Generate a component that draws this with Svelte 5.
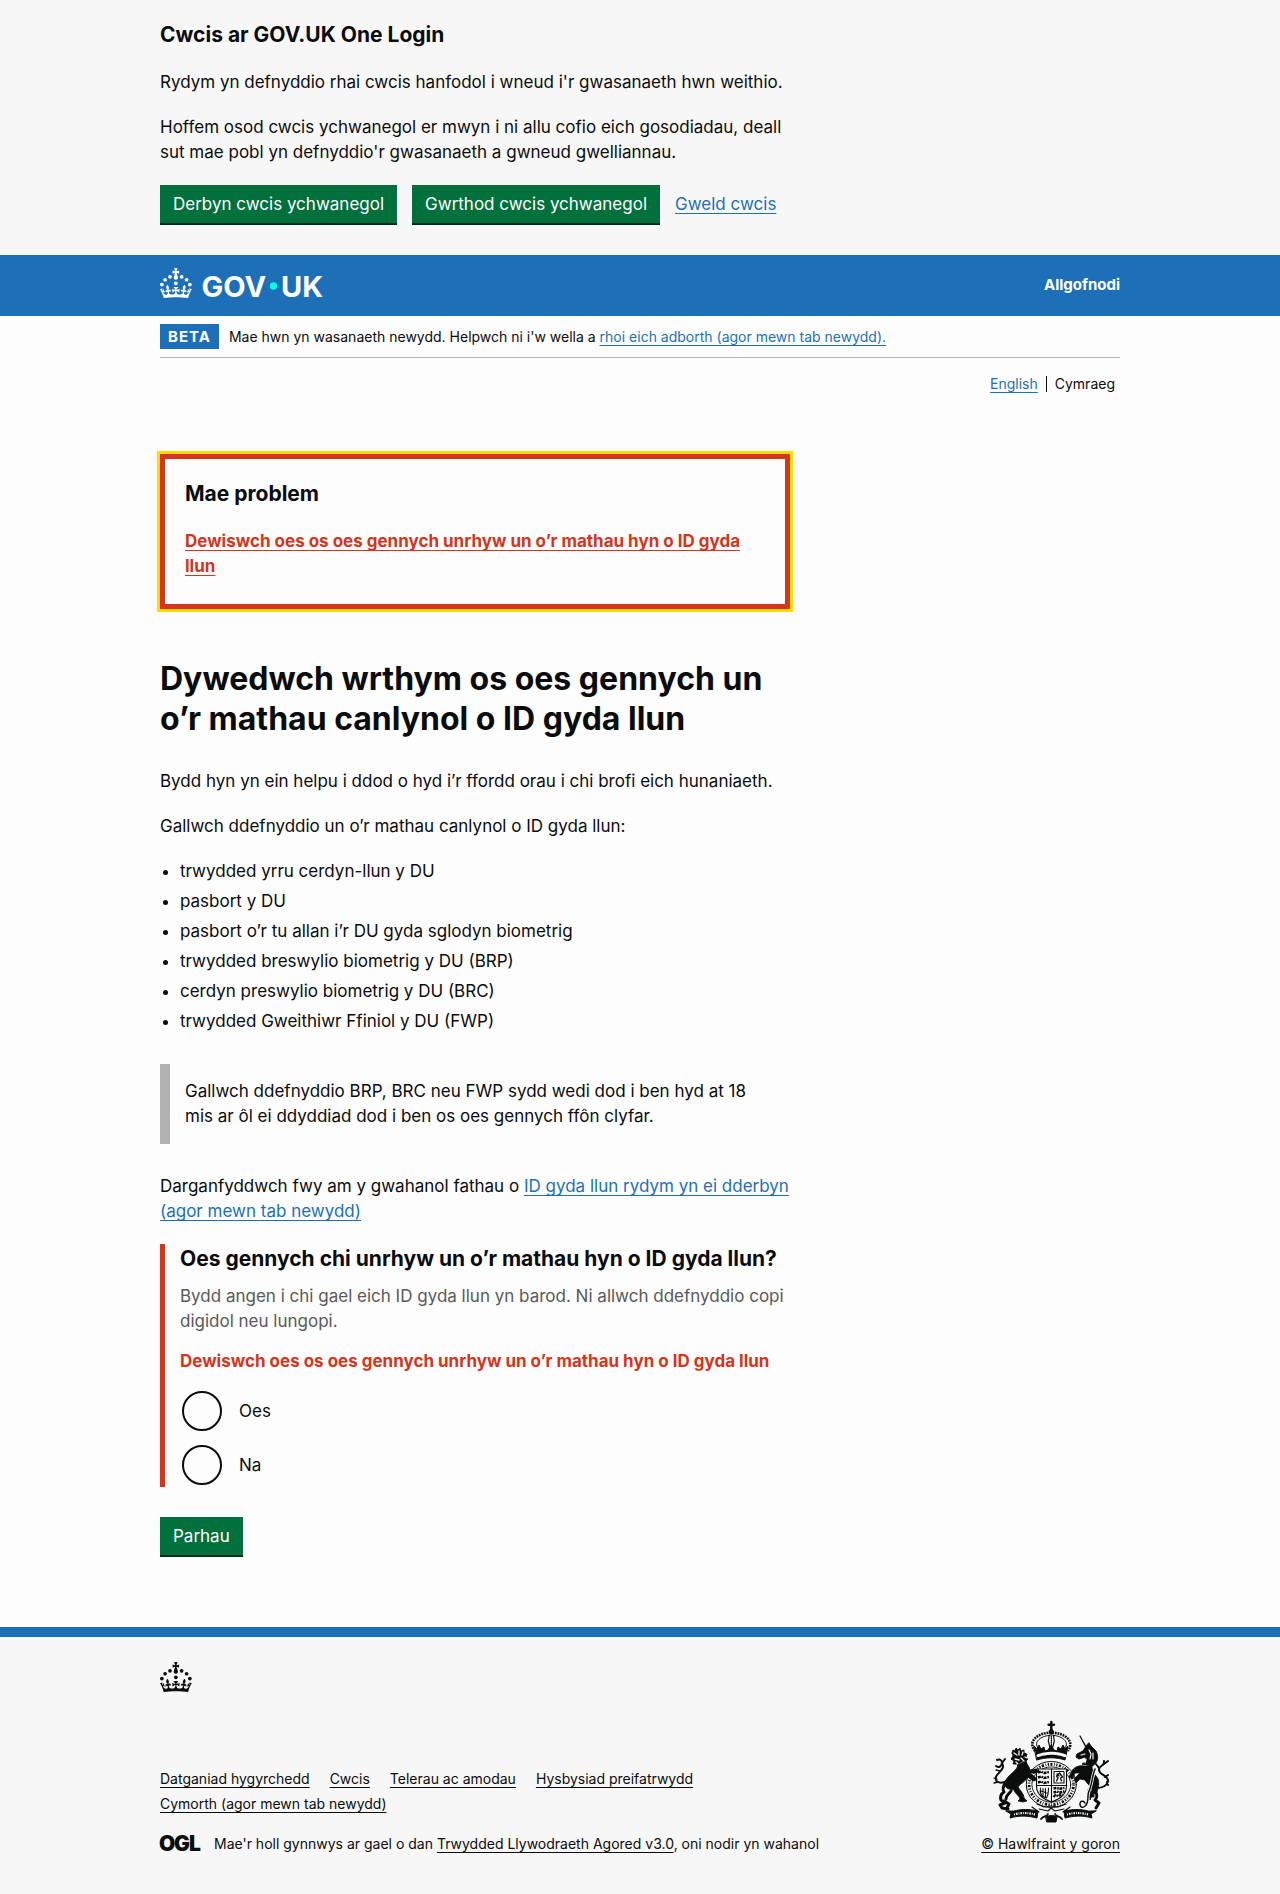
<script>
  const idTypes = [
    'trwydded yrru cerdyn-llun y DU',
    'pasbort y DU',
    'pasbort o’r tu allan i’r DU gyda sglodyn biometrig',
    'trwydded breswylio biometrig y DU (BRP)',
    'cerdyn preswylio biometrig y DU (BRC)',
    'trwydded Gweithiwr Ffiniol y DU (FWP)'
  ];
  const footerLinks = [
    'Datganiad hygyrchedd',
    'Cwcis',
    'Telerau ac amodau',
    'Hysbysiad preifatrwydd',
    'Cymorth (agor mewn tab newydd)'
  ];
  const options = [
    { value: 'yes', label: 'Oes' },
    { value: 'no', label: 'Na' }
  ];
  let answer = $state('');
</script>

{#snippet crown()}
  <circle cx="20" cy="17.6" r="3.7" />
  <circle cx="10.2" cy="23.5" r="3.7" />
  <circle cx="3.7" cy="33.2" r="3.7" />
  <circle cx="31.7" cy="30.6" r="3.7" />
  <circle cx="43.3" cy="17.6" r="3.7" />
  <circle cx="53.2" cy="23.5" r="3.7" />
  <circle cx="59.7" cy="33.2" r="3.7" />
  <path d="M33.1,9.8c.2-.1.3-.3.5-.5l4.6,2.4v-6.8l-4.6,1.5c-.1-.2-.3-.3-.5-.5l1.9-5.9h-6.7l1.9,5.9c-.2.1-.3.3-.5.5l-4.6-1.5v6.8l4.6-2.4c.1.2.3.3.5.5l-2.6,8c-.9,2.8,1.2,5.7,4.1,5.7h0c3,0,5.1-2.9,4.1-5.7l-2.6-8ZM37,37.9s-3.4,3.8-4.1,6.1c2.2,0,4.2-.5,6.4-2.8l-.7,8.5c-2-2.8-4.4-4.1-5.7-3.8.1,3.1.5,6.7,5.8,7.2,3.7.3,6.7-1.5,7-3.8.4-2.6-2-4.3-3.7-1.6-1.4-4.5,2.4-6.1,4.9-3.2-1.9-4.5-1.8-7.7,2.4-10.9,3,4,2.6,7.3-1.2,11.1,2.4-1.3,6.2,0,4,4.6-1.2-2.8-3.7-2.2-4.2.2-.3,1.7.7,3.7,3,4.2,1.9.3,4.7-.9,7-5.9-1.3,0-2.4.7-3.9,1.7l2.4-8c.6,2.3,1.4,3.7,2.2,4.5.6-1.6.5-2.8,0-5.3l5,1.8c-2.6,3.6-5.2,8.7-7.3,17.5-7.4-1.1-15.7-1.7-24.5-1.7h0c-8.8,0-17.1.6-24.5,1.7-2.1-8.9-4.7-13.9-7.3-17.5l5-1.8c-.5,2.5-.6,3.7,0,5.3.8-.8,1.6-2.3,2.2-4.5l2.4,8c-1.5-1-2.6-1.7-3.9-1.7,2.3,5,5.2,6.2,7,5.9,2.3-.4,3.3-2.4,3-4.2-.5-2.4-3-3.1-4.2-.2-2.2-4.6,1.6-6,4-4.6-3.7-3.7-4.2-7.1-1.2-11.1,4.2,3.2,4.3,6.4,2.4,10.9,2.5-2.8,6.3-1.3,4.9,3.2-1.8-2.7-4.1-1-3.7,1.6.3,2.3,3.3,4.1,7,3.8,5.4-.5,5.7-4.2,5.8-7.2-1.3-.2-3.7,1-5.7,3.8l-.7-8.5c2.2,2.3,4.2,2.7,6.4,2.8-.7-2.3-4.1-6.1-4.1-6.1h10.6,0Z" />
{/snippet}

<section class="cookies" aria-label="Cwcis ar GOV.UK One Login">
  <div class="container">
    <div class="column">
      <h2 class="heading-m">Cwcis ar GOV.UK One Login</h2>
      <p>Rydym yn defnyddio rhai cwcis hanfodol i wneud i'r gwasanaeth hwn weithio.</p>
      <p>Hoffem osod cwcis ychwanegol er mwyn i ni allu cofio eich gosodiadau, deall sut mae pobl yn defnyddio'r gwasanaeth a gwneud gwelliannau.</p>
      <div class="actions">
        <button type="button">Derbyn cwcis ychwanegol</button>
        <button type="button">Gwrthod cwcis ychwanegol</button>
        <a href="#cwcis">Gweld cwcis</a>
      </div>
    </div>
  </div>
</section>

<header>
  <div class="container header-row">
    <a class="logo" href="#gov" aria-label="GOV.UK">
      <svg viewBox="0 0 324 60" width="162" height="30" fill="currentColor" aria-hidden="true">
        {@render crown()}
        <text x="83" y="58" class="wordmark">GOV</text>
        <circle class="dot" cx="227" cy="36" r="7.3" />
        <text x="242" y="58" class="wordmark">UK</text>
      </svg>
    </a>
    <a class="sign-out" href="#allgofnodi">Allgofnodi</a>
  </div>
</header>

<div class="container">
  <div class="phase">
    <strong class="tag">BETA</strong>
    <span>Mae hwn yn wasanaeth newydd. Helpwch ni i'w wella a <a href="#adborth">rhoi eich adborth (agor mewn tab newydd).</a></span>
  </div>
  <nav class="languages" aria-label="Dewis iaith">
    <a href="#english" lang="en">English</a>
    <span class="current">Cymraeg</span>
  </nav>

  <main class="column">
    <div class="error-summary" role="alert">
      <h2 class="heading-m">Mae problem</h2>
      <a href="#answer-yes">Dewiswch oes os oes gennych unrhyw un o’r mathau hyn o ID gyda llun</a>
    </div>

    <h1>Dywedwch wrthym os oes gennych un o’r mathau canlynol o ID gyda llun</h1>
    <p>Bydd hyn yn ein helpu i ddod o hyd i’r ffordd orau i chi brofi eich hunaniaeth.</p>
    <p>Gallwch ddefnyddio un o’r mathau canlynol o ID gyda llun:</p>
    <ul class="id-types">
      {#each idTypes as type}
        <li>{type}</li>
      {/each}
    </ul>
    <div class="inset">Gallwch ddefnyddio BRP, BRC neu FWP sydd wedi dod i ben hyd at 18 mis ar ôl ei ddyddiad dod i ben os oes gennych ffôn clyfar.</div>
    <p>Darganfyddwch fwy am y gwahanol fathau o <a href="#id">ID gyda llun rydym yn ei dderbyn (agor mewn tab newydd)</a></p>

    <form onsubmit={(e) => e.preventDefault()}>
      <div class="group">
        <fieldset aria-describedby="hint error">
          <legend class="heading-m">Oes gennych chi unrhyw un o’r mathau hyn o ID gyda llun?</legend>
          <div id="hint" class="hint">Bydd angen i chi gael eich ID gyda llun yn barod. Ni allwch ddefnyddio copi digidol neu lungopi.</div>
          <p id="error" class="error-message">Dewiswch oes os oes gennych unrhyw un o’r mathau hyn o ID gyda llun</p>
          <div class="radios">
            {#each options as option}
              <div class="radio">
                <input type="radio" id="answer-{option.value}" name="answer" value={option.value} bind:group={answer} />
                <label for="answer-{option.value}">{option.label}</label>
              </div>
            {/each}
          </div>
        </fieldset>
      </div>
      <button type="submit">Parhau</button>
    </form>
  </main>
</div>

<footer>
  <div class="container">
    <svg class="footer-crown" viewBox="0 0 64 60" width="32" height="30" fill="currentColor" aria-hidden="true">
      {@render crown()}
    </svg>
    <div class="meta">
      <div class="meta-main">
        <ul class="footer-links">
          {#each footerLinks as link}
            <li><a href="#footer">{link}</a></li>
          {/each}
        </ul>
        <div class="licence">
          <svg width="42" height="25" viewBox="0 0 42 25" role="img" aria-label="OGL">
            <text y="20" class="ogl"><tspan x="-1">O</tspan><tspan x="14">G</tspan><tspan x="29">L</tspan></text>
          </svg>
          <span>Mae'r holl gynnwys ar gael o dan <a href="#ogl">Trwydded Llywodraeth Agored v3.0</a>, oni nodir yn wahanol</span>
        </div>
      </div>
      <a class="copyright" href="#hawlfraint">
        <svg viewBox="0 0 118 102" width="118" height="102" fill="none" stroke="currentColor" stroke-linecap="round" stroke-linejoin="round" aria-hidden="true">
          <!-- Crown -->
          <path d="M59.3 1v8M56.6 3.8h5.4" stroke-width="2.4" />
          <circle cx="59.3" cy="10.8" r="2.2" fill="currentColor" />
          <path d="M43 30C35 20 46 12 59 11.5C73 12 83 20 76 30" stroke-width="2.6" stroke-dasharray="1.8 .9" stroke-linecap="butt" />
          <path d="M46 27C41 21 49 15 57 14.5M73 27C78 21 70 15 62 14.5" stroke-width="1" />
          <path d="M57.4 14h4l.9 6l-1.8 7h-2.4l-1.8-7z" stroke-width="1.2" />
          <path d="M59.4 15v10" stroke-width="1.2" stroke-dasharray="1 1" />
          <path d="M42 25l3 3l2-4l2 4l3-2l1 4l3-1l3-5l3 5l3 1l1-4l3 2l2-4l2 4l3-3l-3 14c-9-3-19-3-28 0z" fill="currentColor" stroke-width="1" />
          <path d="M46 34.6c9-3 18-3 27 0" stroke="#f7f7f7" stroke-width="3" stroke-dasharray="3.4 1.5" />
          <!-- Garter -->
          <ellipse cx="59.3" cy="63.5" rx="25" ry="23" stroke-width="1" />
          <ellipse cx="59.3" cy="63.5" rx="22.2" ry="20.2" stroke-width="2.8" stroke-dasharray="1.2 1.4 2.2 1.6 .8 1.5" stroke-linecap="butt" />
          <ellipse cx="59.3" cy="63.5" rx="19.4" ry="17.6" stroke-width=".9" />
          <!-- Shield -->
          <path d="M44.5 48h30v17c0 9-7 13-15 16c-8-3-15-7-15-16z" fill="#f7f7f7" stroke-width="1.1" />
          <path d="M59.5 48v33M44.5 64.5h30" stroke-width="1.1" />
          <path d="M46 51.5l3-1l3 1.5l5-1M46 56.5l3-1l3 1.5l5-1M46 61.5l3-1l3 1.5l5-1M61.5 76l2-2l3 1l4-2M61.5 71.5l3-1l3 1l5-1M61.5 67.5l3-.6l3 .8l5-.8" stroke-width="2.4" stroke-dasharray="3 .8 1.6 .7" stroke-linecap="butt" />
          <path d="M62 50.5h10v11.5h-10z" stroke-width="1.1" stroke-dasharray="1.4 .7" />
          <path d="M64.5 60l1.5-3l-1.5-2l3-3l1.5 2l1.5 2l-2 1l1 3M65 53l2 2" stroke-width="1.3" />
          <path d="M48.5 67c-1 5 1 9 6 10c2-3 2-7 2-10M51 67.5v7M53.5 67.5v8M49 70l6 2" stroke-width="1.1" />
          <!-- Lion -->
          <path d="M21 29l2 1l1-3l2 2l2-2l1 3l3-1l0 3l3 1l-1 3l2 2l-2 2l1 3l-3 0l0 3l-3-1l-3 1l-1-3l-4 0l1-3l-3-2l2-3l-1-3z" fill="currentColor" stroke-width="1" stroke-dasharray="1.6 1" />
          <path d="M22 32l3 2M27 30l0 4M31 31l-1 3M23 38l4 1M29 37l3 3M33 36l2 1M28 43l3-2M24 41l2 2" stroke="#f7f7f7" stroke-width="1.3" />
          <path d="M26 44c-1 6-9 9-12 15c-2 4-1 8 3 9l5 1c1 4 5 5 6 9l-2 2l5 1l4-1l-3-3c0-4-4-8-6-11c3-4 8-6 10-10l5 4l4-1l-2-3l-5-4l7 0l2-3l-5-1l-4 1c-1-4-3-7-6-8z" fill="currentColor" stroke-width=".8" />
          <path d="M14 61c-3 4-4 7-2 10c-3 2-4 5-3 8l4 3l-5 2l2 3l6 1M12 80l5 3l-2 4M19 70c-2 3-5 4-5 8" stroke-width="3" />
          <path d="M15 60C7 64 1 60 5 54C9 49 13 47 10 42M5 39c3-1 5 0 5 3l3-4M4 45c3 2 5 1 6-3" stroke-width="2" />
          <path d="M2 57l3 1M2 62l4-1M8 50l-4-1" stroke-width="1.3" />
          <!-- Unicorn -->
          <path d="M88 15l6 11" stroke-width="1.3" stroke-dasharray="2 .6" />
          <path d="M94 25l-3 5l-6 3l-1 3l3 2l6-2l2 4l-5 3l10 2c6-3 7-9 4-15l-5-5l-2-3z" fill="currentColor" stroke-width="1" />
          <path d="M89 34l4-1M97 29l2 4l-1 5M101 32l0 6M94 38l-1 4" stroke="#f7f7f7" stroke-width="1.2" />
          <path d="M93 45c-6-1-11 1-13 5l-3 6l3 2l3-6l5 0l-6 6l2 4l4-4l5 1c2 4 6 6 7 10l-3 6l1 4l2-4l5-4c2-6 3-12-1-16c-3-3-4-7-4-10z" fill="currentColor" stroke-width=".8" />
          <path d="M102 69c3 3 4 7 1 10l4 3l-3 5M97 69l4 6" stroke-width="3" />
          <path d="M103 48c-3 8-3 15-6 22c-2 5 0 10-3 14c-3 4-6 2-6-1s3-4 5-1" stroke="#f7f7f7" stroke-width="3.2" />
          <path d="M103 48c-3 8-3 15-6 22c-2 5 0 10-3 14c-3 4-6 2-6-1s3-4 5-1" stroke-width="1.5" stroke-dasharray="1.8 1" />
          <path d="M104 67c9 0 14-5 11-10c-3-4-9-4-8-9c1-4 6-3 5-8M112 43l4-3M107 47l-3-4M113 56l3-2M115 61l1 3" stroke-width="2" />
          <!-- Scroll -->
          <path d="M14 90l5 3l-1 4c10-3 19-2 27 0l1-7c-9-2-17-2-24 0z" fill="currentColor" stroke-width="1" />
          <path d="M104 90l-5 3l1 4c-10-3-19-2-27 0l-1-7c9-2 17-2 24 0z" fill="currentColor" stroke-width="1" />
          <path d="M22 93.5c7-2 14-2 21 0M75 93.5c7-2 14-2 21 0" stroke="#f7f7f7" stroke-width="2.2" stroke-dasharray=".9 1.1 1.5 1" stroke-linecap="butt" />
          <path d="M45 83l7 3l7-1l7 1l8-3M47 88l9 2l3-3l4 3l9-2M40 86l7 5M78 86l-7 5" stroke-width="1.2" />
          <path d="M49 98c3-4 6-2 7-5M70 98c-3-4-6-2-7-5" stroke-width="1.8" />
          <path d="M54 96c3-2 8-2 11 0l-1 5h-9z" fill="currentColor" stroke-width="1" />
        </svg>
        <span>© Hawlfraint y goron</span>
      </a>
    </div>
  </div>
</footer>

<style>
  :global(body) {
    margin: 0;
    background: #fdfdfd;
    color: #0b0c0c;
    font-family: Inter, "Open Sans", sans-serif;
    font-size: 17px;
    line-height: 25px;
  }
  .container {
    max-width: 960px;
    margin: 0 auto;
  }
  .column {
    max-width: 630px;
  }
  p {
    margin: 0 0 20px;
  }
  a {
    color: #1d70b8;
    text-decoration: underline;
    text-decoration-thickness: 1px;
    text-underline-offset: 3px;
    text-decoration-skip-ink: none;
  }
  svg {
    overflow: visible;
  }
  .heading-m {
    margin: 0 0 20px;
    font-size: 21px;
    line-height: 30px;
    font-weight: 700;
  }
  button {
    padding: 7px 13px 6px;
    border: 0;
    background: #00703c;
    box-shadow: 0 2px 0 #002d18;
    color: #fff;
    font-family: inherit;
    font-size: 17px;
    line-height: 25px;
    cursor: pointer;
  }
  .cookies {
    padding: 20px 0 32px;
    background: #f7f7f7;
  }
  .actions {
    display: flex;
    align-items: center;
    gap: 15px;
  }

  header {
    background: #1d70b8;
    padding: 13px 0 14px;
  }
  .header-row {
    display: flex;
    justify-content: space-between;
    align-items: flex-start;
  }
  .logo {
    color: #fff;
  }
  .logo svg {
    display: block;
  }
  .wordmark {
    font-size: 58px;
    font-weight: 700;
  }
  .dot {
    fill: #00ffe0;
  }
  .sign-out {
    color: #fff;
    font-size: 15px;
    line-height: 34px;
    font-weight: 700;
    text-decoration: none;
  }
  .phase {
    display: flex;
    align-items: center;
    gap: 10px;
    padding: 8px 0;
    border-bottom: 1px solid #b1b4b6;
    font-size: 14px;
  }
  .tag {
    padding: 0 8px;
    background: #1d70b8;
    color: #fff;
    font-size: 15px;
    letter-spacing: 1px;
  }
  .languages {
    display: flex;
    justify-content: flex-end;
    align-items: center;
    gap: 8px;
    padding: 13px 5px 58px 0;
    font-size: 14px;
  }
  .current {
    padding-left: 8px;
    border-left: 1px solid #0b0c0c;
    line-height: 16px;
  }

  .error-summary {
    margin-bottom: 50px;
    padding: 20px 20px 25px;
    border: 5px solid #d4351c;
    outline: 3px solid #ffdd00;
  }
  .error-summary a {
    display: inline-block;
    color: #d4351c;
    font-weight: 700;
  }
  h1 {
    margin: 0 0 30px;
    font-size: 32px;
    line-height: 40px;
    font-weight: 700;
  }
  .id-types {
    margin: 0 0 30px;
    padding-left: 20px;
  }
  .id-types li {
    margin-bottom: 5px;
  }
  .inset {
    margin-bottom: 30px;
    padding: 15px;
    border-left: 10px solid #b1b1b1;
  }
  .group {
    margin-bottom: 30px;
    padding-left: 15px;
    border-left: 5px solid #d4351c;
  }
  fieldset {
    margin: 0;
    padding: 0;
    border: 0;
    min-width: 0;
  }
  legend {
    padding: 0;
  }
  fieldset .heading-m {
    margin-bottom: 10px;
  }
  .hint {
    margin-bottom: 15px;
    color: #595959;
  }
  .error-message {
    margin-bottom: 15px;
    color: #d4351c;
    font-weight: 700;
  }
  .radios {
    display: grid;
    gap: 10px;
  }
  .radio {
    display: flex;
    align-items: center;
    gap: 17px;
    min-height: 44px;
  }
  .radio input {
    appearance: none;
    width: 40px;
    height: 40px;
    margin: 0 0 0 2px;
    border: 2px solid #0b0c0c;
    border-radius: 50%;
  }
  .radio input:checked {
    background: radial-gradient(#0b0c0c 10px, transparent 11px);
  }
  form button {
    display: block;
  }

  footer {
    margin-top: 72px;
    padding: 25px 0 38px;
    border-top: 10px solid #1d70b8;
    background: #f7f7f7;
    font-size: 14px;
  }
  footer a {
    color: #0b0c0c;
  }
  .footer-crown {
    display: block;
    margin-bottom: 29px;
  }
  .meta {
    display: flex;
    justify-content: space-between;
    align-items: flex-end;
    gap: 30px;
  }
  .meta-main {
    flex: 1;
  }
  .footer-links {
    display: flex;
    flex-wrap: wrap;
    gap: 0 20px;
    max-width: 640px;
    margin: 0 0 15px;
    padding: 0;
    list-style: none;
  }
  .licence {
    display: flex;
    align-items: center;
    gap: 12px;
  }
  .ogl {
    font-size: 21px;
    font-weight: 900;
    fill: #0b0c0c;
  }
  .copyright {
    display: grid;
    justify-items: center;
    row-gap: 8px;
  }
</style>
